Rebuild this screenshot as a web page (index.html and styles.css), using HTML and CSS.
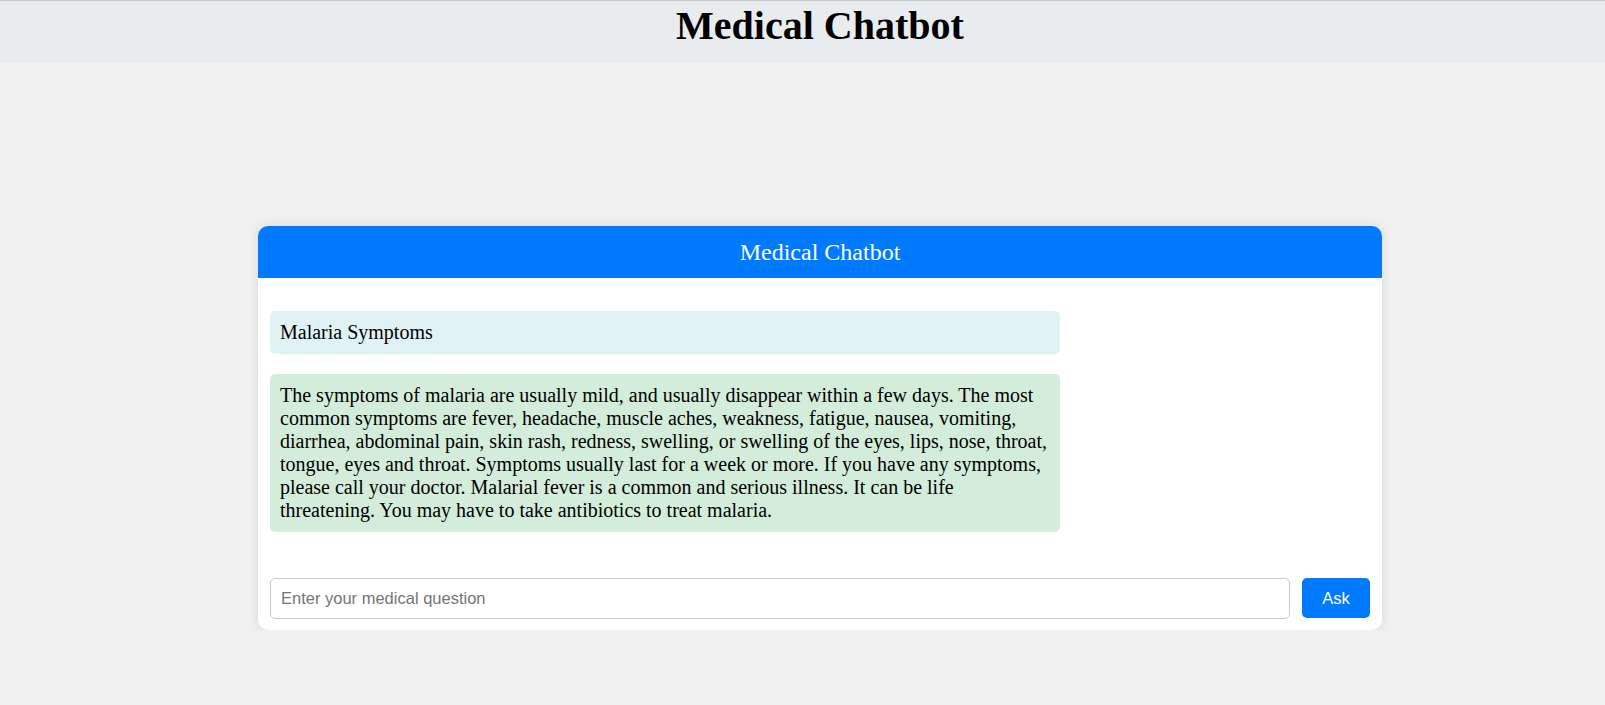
FILE: index.html
```html
<!DOCTYPE html>
<html lang="en">
<head>
<meta charset="utf-8">
<title>Medical Chatbot</title>
<link rel="stylesheet" href="styles.css">
</head>
<body>
  <header class="site-header">
    <h1 class="site-title">Medical Chatbot</h1>
  </header>
  <main class="page">
    <section class="chat-card">
      <div class="chat-header">Medical Chatbot</div>
      <div class="chat-body">
        <div class="msg msg-user">Malaria Symptoms</div>
        <div class="msg msg-bot">The symptoms of malaria are usually mild, and usually disappear within a few days. The most common symptoms are fever, headache, muscle aches, weakness, fatigue, nausea, vomiting, diarrhea, abdominal pain, skin rash, redness, swelling, or swelling of the eyes, lips, nose, throat, tongue, eyes and throat. Symptoms usually last for a week or more. If you have any symptoms, please call your doctor. Malarial fever is a common and serious illness. It can be life threatening. You may have to take antibiotics to treat malaria.</div>
      </div>
      <form class="chat-input-row">
        <input class="chat-input" type="text" placeholder="Enter your medical question">
        <button class="ask-btn" type="button">Ask</button>
      </form>
    </section>
  </main>
</body>
</html>
```
FILE: styles.css
```css
html, body {
  margin: 0;
  padding: 0;
}
body {
  background: #f0f0f0;
  font-family: "Liberation Serif", "Times New Roman", serif;
  color: #000;
}
.site-header {
  background: #e9ecef;
  border-top: 1px solid #c5c9cd;
  padding: 2px 0 14px 35px;
  text-align: center;
}
.site-title {
  margin: 0;
  font-size: 40px;
  line-height: 46px;
  font-weight: bold;
}
.page {
  padding-left: 35px;
  padding-top: 163px;
  display: flex;
  justify-content: center;
}
.chat-card {
  width: 1124px;
  background: #fff;
  border-radius: 10px;
  box-shadow: 0 0 10px rgba(0, 0, 0, 0.1);
  overflow: hidden;
}
.chat-header {
  height: 52px;
  background: #007bff;
  color: #fff;
  font-size: 24px;
  display: flex;
  align-items: center;
  justify-content: center;
}
.chat-body {
  padding: 33px 12px 0;
  display: flex;
  flex-direction: column;
  gap: 20px;
}
.msg {
  width: 790px;
  box-sizing: border-box;
  padding: 10px;
  border-radius: 5px;
  font-size: 20px;
  line-height: 23px;
}
.msg-user {
  background: #e0f2f5;
}
.msg-bot {
  background: #d4edda;
}
.chat-input-row {
  margin: 46px 0 0;
  padding: 0 12px 11px;
  display: flex;
  align-items: flex-start;
  gap: 12px;
}
.chat-input {
  flex: 1;
  height: 41px;
  box-sizing: border-box;
  border: 1px solid #ccc;
  border-radius: 5px;
  padding: 0 10px;
  font-family: "Liberation Sans", Arial, sans-serif;
  font-size: 16.5px;
  color: #333;
  outline: none;
}
.chat-input::placeholder {
  color: #757575;
}
.ask-btn {
  width: 68px;
  height: 40px;
  border: none;
  border-radius: 5px;
  background: #007bff;
  color: #fff;
  font-family: "Liberation Sans", Arial, sans-serif;
  font-size: 16.5px;
  padding: 0;
  cursor: pointer;
}
```
